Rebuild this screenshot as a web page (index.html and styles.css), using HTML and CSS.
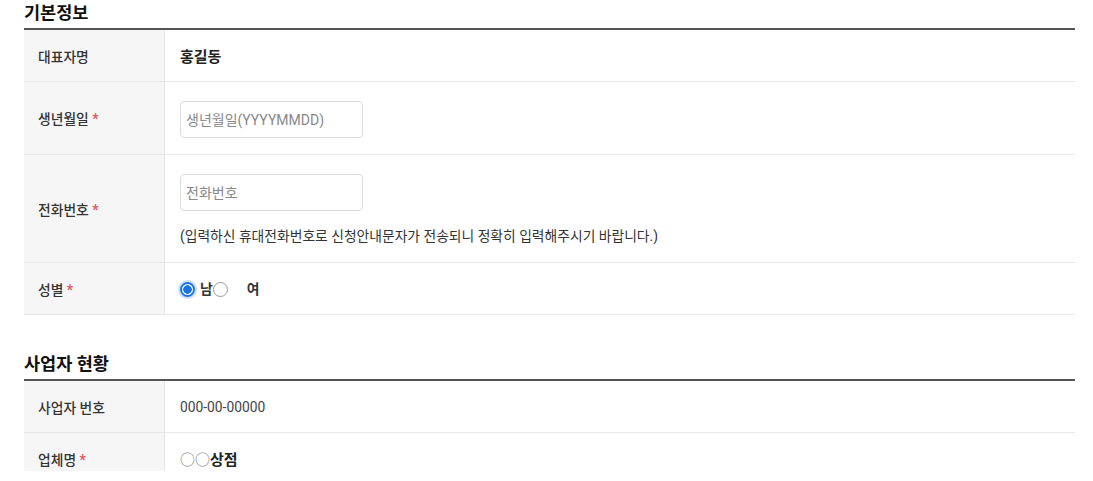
FILE: index.html
```html
<!DOCTYPE html>
<html lang="ko">
<head>
    <meta charset="UTF-8">
    <meta name="viewport" content="width=device-width, initial-scale=1.0">
    <title>신청서 작성</title>
<link rel="stylesheet" href="styles.css">
</head>
<body>

    <div id="wrapper">
      <h2 class="sectionTitle">기본정보</h2>
      <table class="formTable">
        <tr class="rowSmall">
          <th>대표자명</th>
          <td class="strong">홍길동</td>
        </tr>
        <tr>
          <th>생년월일 <span class="req">*</span></th>
          <td class="inputCell"><input type="text" class="field" placeholder="생년월일(YYYYMMDD)"></td>
        </tr>
        <tr>
          <th>전화번호 <span class="req">*</span></th>
          <td class="inputCell">
            <input type="text" class="field" placeholder="전화번호">
            <p class="help">(입력하신 휴대전화번호로 신청안내문자가 전송되니 정확히 입력해주시기 바랍니다.)</p>
          </td>
        </tr>
        <tr class="rowSmall">
          <th>성별 <span class="req">*</span></th>
          <td>
            <label class="radio"><input type="radio" name="gender" checked><span>남</span></label><label class="radio"><input type="radio" name="gender"><span class="far">여</span></label>
          </td>
        </tr>
      </table>

      <h2 class="sectionTitle second">사업자 현황</h2>
      <table class="formTable">
        <tr class="rowSmall">
          <th>사업자 번호</th>
          <td class="plain">000-00-00000</td>
        </tr>
        <tr class="rowSmall">
          <th>업체명 <span class="req">*</span></th>
          <td class="strong"><span class="circles">○○</span>상점</td>
        </tr>
      </table>
    </div>

</body>
</html>
```
FILE: styles.css
```css
html {
  font-family: Roboto, "Noto Sans CJK KR", "Noto Sans", sans-serif;
}

body {
  margin: 0;
  background-color: #fff;
  color: #222;
}

#wrapper {
  width: 1051px;
  margin-left: 24px;
  height: 471px;
  overflow: hidden;
}

.sectionTitle {
  margin: 0;
  font-size: 17.5px;
  font-weight: 700;
  line-height: 26px;
  padding-bottom: 2px;
  color: #111;
}

.sectionTitle.second {
  margin-top: 36px;
}

.formTable {
  width: 100%;
  border-collapse: collapse;
  border-top: 2px solid #555;
}

.formTable th {
  width: 126px;
  background-color: #f6f6f6;
  border-right: 1px solid #e6e6e6;
  border-bottom: 1px solid #e8e8e8;
  text-align: left;
  padding: 0 0 0 14px;
  font-size: 13.8px;
  font-weight: 500;
  color: #333;
}

.formTable td {
  border-bottom: 1px solid #e8e8e8;
  padding: 0 0 0 15px;
  font-size: 13.8px;
  color: #333;
}

.rowSmall td,
.rowSmall th {
  height: 51px;
}

.inputCell {
  padding: 19px 0 16px 15px !important;
}

.strong {
  font-size: 15px !important;
  font-weight: 700;
  color: #222 !important;
}

.plain {
  color: #444 !important;
}

.circles {
  font-weight: 400;
  color: #888;
}

.req {
  color: #e05a5a;
  font-weight: 700;
}

.field {
  box-sizing: border-box;
  width: 183px;
  height: 37px;
  border: 1px solid #ddd;
  border-radius: 4px;
  padding: 0 5px;
  font-family: inherit;
  font-size: 14px;
  display: block;
}

.field::placeholder {
  color: #888;
}

.help {
  margin: 15px 0 0;
  line-height: 20px;
  font-size: 13.8px;
  color: #333;
}

.radio {
  display: inline-flex;
  align-items: center;
  font-size: 13.8px;
  font-weight: 700;
  color: #333;
}

.radio input {
  appearance: none;
  width: 15px;
  height: 15px;
  margin: 3px 5px 0 0;
  border-radius: 50%;
  border: 1px solid #999;
  background: #fff;
}

.radio input:checked {
  border: 2px solid #1a73e8;
  background: radial-gradient(circle, #1a73e8 0 4px, #fff 4.5px);
  box-shadow: 0 0 0 2px #cfe0fb;
}

.radio .far {
  margin-left: 14px;
}
```
